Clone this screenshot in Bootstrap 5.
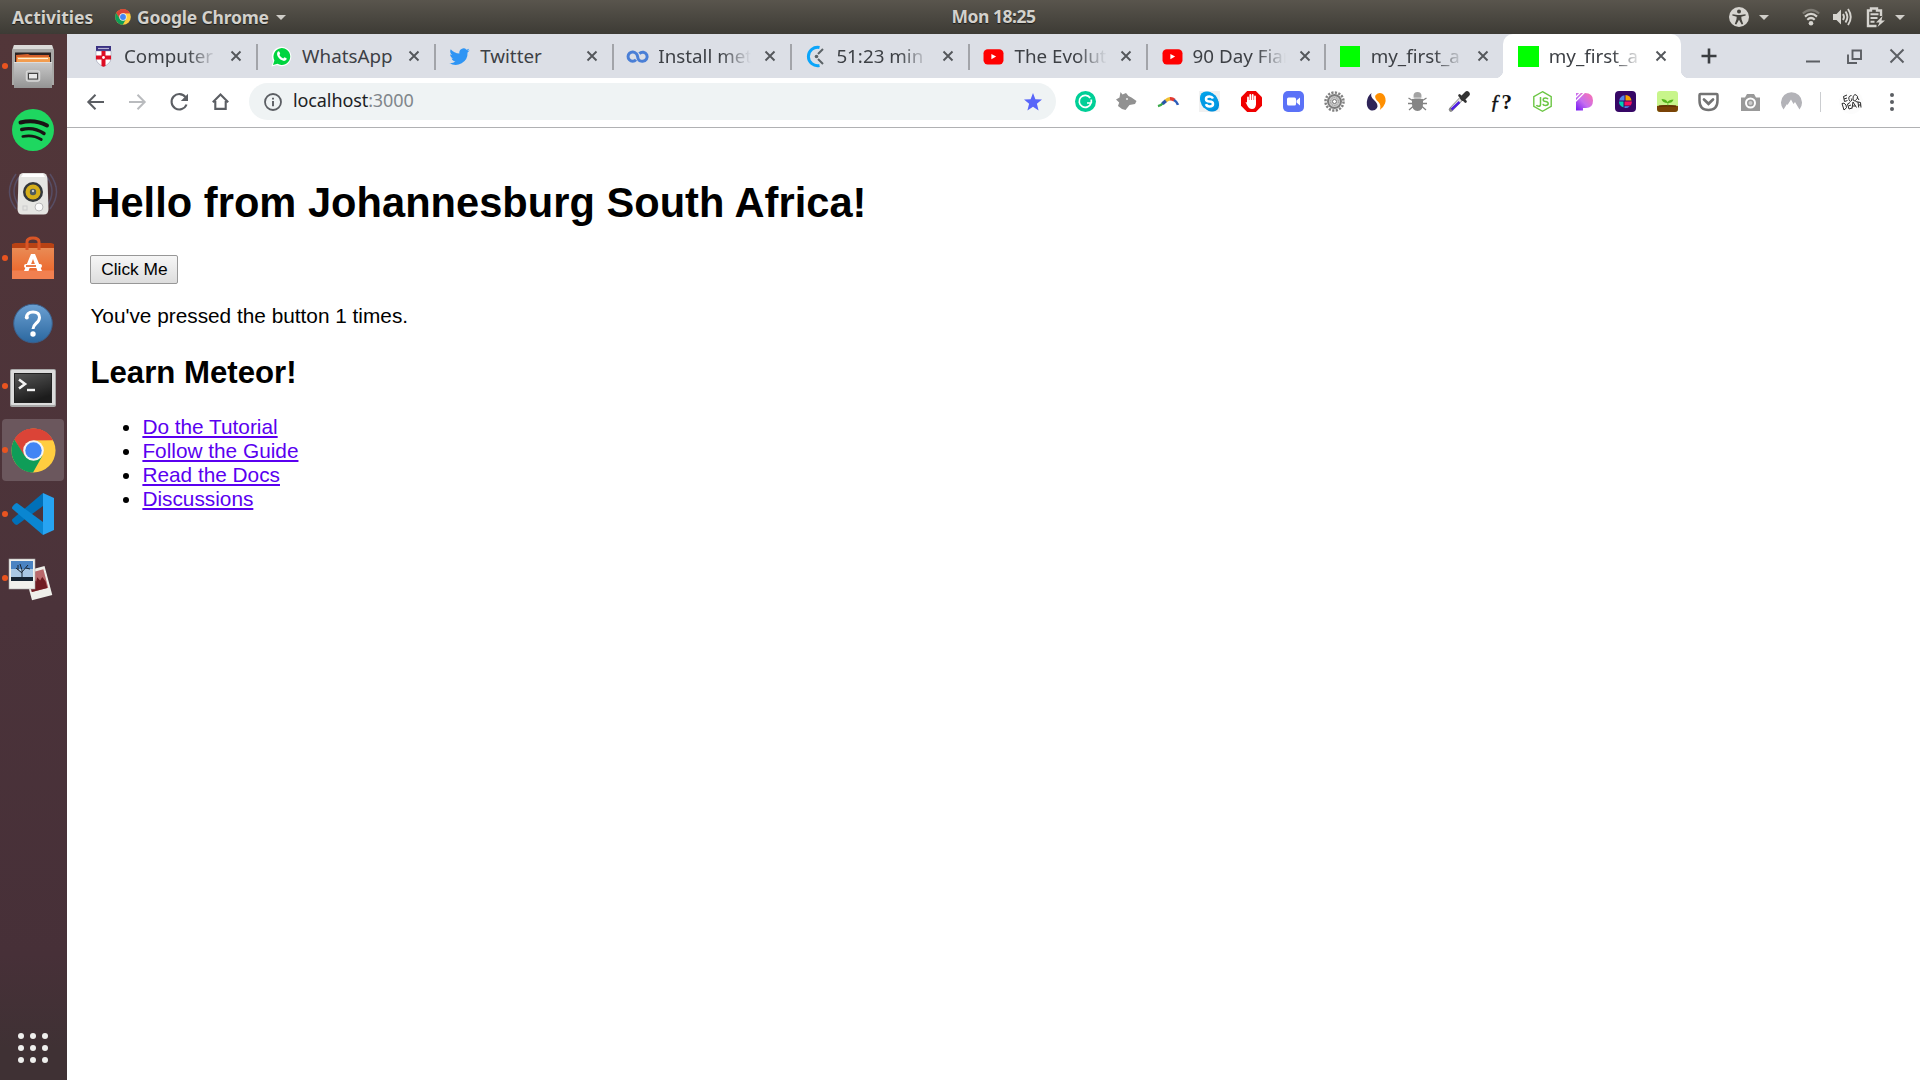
<!DOCTYPE html>
<html lang="en">
<head>
<meta charset="utf-8">
<meta name="viewport" content="width=device-width, initial-scale=1">
<title>my_first_app</title>
<link href="https://cdn.jsdelivr.net/npm/bootstrap@5.3.0/dist/css/bootstrap.min.css" rel="stylesheet">
<style>
  body { font-family: "Noto Sans", "Open Sans", sans-serif; background: #fff; height: 1080px; line-height: 1.2; }
  svg { display: block; flex: none; overflow: visible; }
  /* desktop panel */
  .panel-top { height: 34px; background: linear-gradient(#59554d, #3d3b35); color: #d3d1cc; font-weight: 700; font-size: 17.5px; text-shadow: 0 1px 1px rgba(0,0,0,.6); }
  .panel-start { flex: 1 1 67px; }
  .panel-end { flex: 1 1 0; }
  .p-activities { margin-left: 12px; width: 103px; }
  .p-app { width: 135px; margin-left: 6px; letter-spacing: -.2px; }
  .p-clock { letter-spacing: -.5px; padding-bottom: 1px; }
  .caret-d { width: 0; height: 0; border: 5px solid transparent; border-top-color: #d0cec9; border-bottom: 0; }
  /* dock */
  .dock { width: 67px; background: linear-gradient(#523639, #4b333a 55%, #473038 88%, #3f3134 97%); padding: 1px 3px 0 2px; gap: 2px; }
  .dock-item { height: 62px; width: 62px; border-radius: 4px; }
  .dock-item.active { background: #6b575d; }
  .dock-item.running::before { content: ""; position: absolute; left: 0; top: 28px; width: 6px; height: 6px; border-radius: 50%; background: #e95420; }
  .dock-apps { padding-bottom: 3px; }
  /* tabs */
  .tabstrip { height: 44px; background: #dcdfe6; padding-left: 11px; color: #3d4045; font-size: 18.8px; }
  .tab-item { width: 178.1px; height: 44px; padding-left: 15px; }
  .tab-item.divided::after { content: ""; position: absolute; right: -1.500px; top: 10px; width: 2px; height: 26px; background: #a2a4a9; }
  .tab-name { width: 93px; margin-left: 10px; white-space: nowrap; -webkit-mask-image: linear-gradient(90deg, #000 68%, transparent 100%); mask-image: linear-gradient(90deg, #000 68%, transparent 100%); line-height: 30px; padding-bottom: 1px; }
  .tab-name.full { -webkit-mask-image: none; mask-image: none; }
  .tab-x { margin-left: 13px; }
  .tab-item.current { background: #fff; border-radius: 10px 10px 0 0; }
  .tab-item.current::before, .tab-item.current::after { content: ""; position: absolute; bottom: 0; width: 8px; height: 8px; }
  .tab-item.current::before { left: -8px; background: radial-gradient(circle at 0 0, transparent 8px, #fff 8.5px); }
  .tab-item.current::after { right: -8px; background: radial-gradient(circle at 100% 0, transparent 8px, #fff 8.5px); }
  /* toolbar */
  .toolbar { height: 50px; border-bottom: 1px solid #b0b1b3; padding: 0 0 2px 8px; }
  .nav-b { width: 41.6px; }
  .omni { width: 807.5px; height: 37px; border-radius: 19px; background: #eff3f4; margin-left: 7.6px; padding: 0 14px 0 15px; font-size: 18px; color: #202124; }
  .omni-url { letter-spacing: -.1px; padding-bottom: 1px; }
  .ext { width: 41.57px; }
  .sep { width: 1px; height: 20px; background: #cbcdd0; margin-left: 7.500px; }
  .f-mark { font: italic 700 21px "Liberation Serif", serif; color: #111; line-height: 22px; }
  .f-mark b { font-style: normal; margin-left: 1px; }
  .f-mark i { font-weight: 400; -webkit-text-stroke: .4px #111; }
  /* page */
  .page-body { font-family: "Liberation Sans", Arial, sans-serif; font-size: 20.8px; color: #000; padding: 51.3px 23.4px 0; line-height: 24px; }
  .page-body h1 { font-size: 41.6px; font-weight: 700; line-height: 48px; margin: 0 0 27.7px; color: #000; letter-spacing: .03px; }
  .page-body h2 { font-size: 31.2px; font-weight: 700; line-height: 36px; margin: 0 0 24.4px; color: #000; }
  .page-body p { margin: 19.8px 0 27px; }
  .page-body ul { padding-left: 52px; margin: 0; }
  .page-body a { color: #5a00f0; text-decoration: underline; }
  .page-btn { display: block; font-size: 17.33px; line-height: 19px; height: 29px; width: 88px; padding: 0; color: #000; border: 1px solid #979797; border-radius: 2px; background: linear-gradient(#f6f6f6, #dddddd); }
</style>
<script src="https://cdn.jsdelivr.net/npm/bootstrap@5.3.0/dist/js/bootstrap.bundle.min.js"></script>
</head>
<body class="d-flex flex-column overflow-hidden">
<svg width="0" height="0" class="position-absolute">
  <defs>
    <symbol id="chrome" viewBox="0 0 48 48">
      <circle cx="24" cy="24" r="23.5" fill="#ffcd40"/>
      <path d="M24 24 3.600 12.300A23.500 23.500 0 0 1 44.600 12.800L24 13z" fill="#db4437"/>
      <path d="M24 13H44.700A23.500 23.500 0 0 0 3.600 12.300L14 30z" fill="#db4437"/>
      <path d="M3.600 12.300A23.500 23.500 0 0 0 23.500 47.500L33.500 29.500 24 34 14.500 29.500z" fill="#0f9d58"/>
      <circle cx="24" cy="24" r="11" fill="#f4f4f4"/><circle cx="24" cy="24" r="8.800" fill="#4285f4"/>
    </symbol>
    <symbol id="x" viewBox="0 0 12 12"><path d="M1.500 1.500l9 9M10.500 1.500l-9 9" stroke="#54575b" stroke-width="1.900" fill="none"/></symbol>
    <symbol id="yt" viewBox="0 0 20 20"><rect x=".5" y="3" width="19" height="14.500" rx="4" fill="#f00"/><path d="M8 7.500v5l4.500-2.500z" fill="#fff"/></symbol>
  </defs>
</svg>

<header class="panel-top d-flex align-items-center">
  <div class="panel-start d-flex align-items-center">
    <span class="p-activities">Activities</span>
    <svg width="16" height="16"><use href="#chrome"/></svg>
    <span class="p-app text-nowrap">Google Chrome</span>
    <span class="caret-d ms-1"></span>
  </div>
  <span class="p-clock">Mon 18:25</span>
  <div class="panel-end d-flex align-items-center justify-content-end">
    <svg width="20" height="20" viewBox="0 0 20 20"><circle cx="10" cy="10" r="10" fill="#d6d4cf"/><circle cx="10" cy="4.500" r="2" fill="#45433d"/><path d="M3.500 7.200l5 .8h3l5-.8.200 1.400-4.400 1.200.2 2.500 1.700 4.600-1.500.6L10 12.800l-2.700 4.700-1.500-.6 1.700-4.600.2-2.500-4.400-1.200z" fill="#45433d"/></svg>
    <span class="caret-d" style="margin:0 33px 0 10px"></span>
    <svg width="18" height="18" viewBox="0 0 18 18" fill="none" stroke-width="2.200"><path d="M.8 5.500Q9-1.500 17.200 5.500" stroke="#7d7a73"/><path d="M3 8.600Q9 3.200 15 8.600M5.300 11.700Q9 8.300 12.700 11.700" stroke="#d6d4cf"/><circle cx="9" cy="15.300" r="2.300" fill="#d6d4cf"/></svg>
    <svg width="20" height="20" viewBox="0 0 20 20" style="margin-left:12px"><path d="M1 7h3.500L9 2.500v15L4.500 13H1z" fill="#d6d4cf"/><path d="M11 7q2 3 0 6M13.500 4.500q3.800 5.500 0 11M16 2q5.500 8 0 16" fill="none" stroke="#d6d4cf" stroke-width="1.900"/></svg>
    <svg width="19" height="20" viewBox="0 0 19 20" style="margin-left:14px"><path d="M10.500 19H2V3.500h3V1.500h6v2h4V9" fill="none" stroke="#d6d4cf" stroke-width="2.400"/><path d="M4.500 7.200h8M4.500 11h7M4.500 14.800h4" stroke="#d6d4cf" stroke-width="2"/><path d="M16.500 9L10 15.500h3.500L11.500 20l7.500-6.500h-3.500z" fill="#d6d4cf"/></svg>
    <span class="caret-d" style="margin:0 15px 0 10px"></span>
  </div>
</header>

<div class="d-flex flex-grow-1">
  <aside class="dock d-flex flex-column flex-shrink-0">
    <div class="dock-item running position-relative d-flex align-items-center justify-content-center">
      <svg width="42" height="44" viewBox="0 0 42 44"><defs><linearGradient id="cab" x2="0" y2="1"><stop stop-color="#c9c9c9"/><stop offset="1" stop-color="#949494"/></linearGradient></defs><path d="M2 1h38l2 5v35H0V6z" fill="#a9a9a7"/><path d="M2 1h38l1 4H1z" fill="#dadad8"/><path d="M3 8.500h36V18H3z" fill="#292323"/><path d="M4 11l12-1 2 1h19v8H4z" fill="#d4602b"/><path d="M5 13h33v6H5z" fill="#f29c4e"/><path d="M6 14.500h30" stroke="#fff0d8" stroke-width="1.200"/><path d="M2 18h38v26H2z" fill="url(#cab)"/><path d="M2 18.500h38" stroke="#ddd"/><rect x="14.500" y="27" width="13" height="10" rx="2" fill="#aaa" stroke="#d7d7d7" stroke-width="1.500"/><rect x="16.500" y="29.500" width="9" height="5.500" fill="#e8e8e8" stroke="#444"/></svg>
    </div>
    <div class="dock-item d-flex align-items-center justify-content-center">
      <svg width="42" height="42" viewBox="0 0 42 42"><circle cx="21" cy="21" r="21" fill="#1ed760"/><g fill="none" stroke="#191414" stroke-linecap="round"><path d="M8.500 13.500q14-3.800 26.500 3" stroke-width="4"/><path d="M9.700 20.500q12-3 22.300 4" stroke-width="3.400"/><path d="M10.800 27.500q10-2.300 18.500 3" stroke-width="2.700"/></g></svg>
    </div>
    <div class="dock-item d-flex align-items-center justify-content-center">
      <svg width="48" height="42" viewBox="0 0 48 42"><g fill="none" stroke="#5d6690" stroke-width="1.500" opacity=".5"><path d="M7 1q-13 18 0 35M10 4q-10 14 0 29M41 1q13 18 0 35M38 4q10 14 0 29"/></g><path d="M14 0h20q4 0 4.500 6l1 30q0 5.500-5 5.500h-21q-5 0-5-5.500l1-30q.5-6 4.500-6z" fill="#e5e5e2"/><path d="M14 1h20l2 3H12z" fill="#fff"/><circle cx="24" cy="19" r="10" fill="#34383b"/><circle cx="24" cy="19" r="7.500" fill="#d5ae19"/><circle cx="24" cy="19" r="3.200" fill="#4d5a60"/><circle cx="24" cy="18" r="1.200" fill="#ccc"/><circle cx="30" cy="34" r="4" fill="#fbfbfb" stroke="#bbb"/><rect x="14" y="33" width="4" height="4" fill="none" stroke="#ccc"/></svg>
    </div>
    <div class="dock-item running position-relative d-flex align-items-center justify-content-center">
      <svg width="42" height="44" viewBox="0 0 42 44"><defs><linearGradient id="bag" x2="0" y2="1"><stop stop-color="#e98b55"/><stop offset=".7" stop-color="#ec6c31"/><stop offset=".75" stop-color="#f18050"/></linearGradient></defs><path d="M0 8l3-1h36l3 1v5H0z" fill="#b84214"/><path d="M0 12h42v31H0z" fill="url(#bag)"/><path d="M15 14V6q0-4 6-4t6 4v8" fill="none" stroke="#d95526" stroke-width="3"/><path d="M12 35l7-17h4l7 17h-4.500l-4.500-12-4.500 12z" fill="#fff"/><rect x="12" y="28" width="18" height="4" rx="2" fill="#fff"/><path d="M14 30h10" stroke="#e8672e" stroke-width="1.700"/></svg>
    </div>
    <div class="dock-item d-flex align-items-center justify-content-center pt-1">
      <svg width="40" height="40" viewBox="0 0 40 40"><defs><linearGradient id="hlp" x2="0" y2="1"><stop stop-color="#6ba0d2"/><stop offset="1" stop-color="#2b679f"/></linearGradient></defs><circle cx="20" cy="19.5" r="19.300" fill="url(#hlp)" stroke="#3b5f8b"/><path d="M13.500 14q0-6 6.500-6t6.500 5.500q0 3-3.500 6-2.800 2.500-3 5.500" fill="none" stroke="#fff" stroke-width="3"/><circle cx="13.800" cy="13.500" r="2" fill="#fff"/><circle cx="20" cy="30" r="2.700" fill="#fff"/></svg>
    </div>
    <div class="dock-item running position-relative d-flex align-items-center justify-content-center pt-1">
      <svg width="46" height="38" viewBox="0 0 46 38"><defs><linearGradient id="trm" x2=".4" y2="1"><stop stop-color="#565656"/><stop offset="1" stop-color="#1c1c1c"/></linearGradient></defs><rect width="46" height="38" rx="2" fill="#a8a8a8"/><rect x="1" y="1" width="44" height="35" rx="1" fill="#dcdcdc"/><rect x="4" y="4" width="38" height="30" fill="#222"/><rect x="5" y="5" width="36" height="28" fill="url(#trm)"/><path d="M9 10.500l6 4.500-6 4.500" fill="none" stroke="#f3f3f3" stroke-width="2.600"/><path d="M17 21h8" stroke="#f3f3f3" stroke-width="2.400"/></svg>
    </div>
    <div class="dock-item running active position-relative d-flex align-items-center justify-content-center"><svg width="45" height="45"><use href="#chrome"/></svg></div>
    <div class="dock-item running position-relative d-flex align-items-center justify-content-center">
      <svg width="42" height="42" viewBox="0 0 42 42"><path d="M31 0v13L5 32q-2 0-4.500-3.500Q-.5 27 .5 26z" fill="#0070b8"/><path d="M.5 16Q-.5 15 .5 13.500 3 10 5 10l26 19v13z" fill="#0a86d1"/><path d="M31 0l11 5v32l-11 5z" fill="#27a4f2"/></svg>
    </div>
    <div class="dock-item running position-relative d-flex align-items-center justify-content-center pt-1 pe-1">
      <svg width="44" height="42" viewBox="0 0 44 42"><g transform="rotate(-15 30 25)"><rect x="19" y="9" width="21" height="30" fill="#efefea"/><rect x="21" y="12" width="17" height="19" fill="#b9686b"/><path d="M21 31v-9l2-2 1 3 2-4 2 3 2-4 2 4 3-3 2 5v7z" fill="#701c22"/></g><rect x="0" y="0" width="26" height="30" fill="#f1f1ed" stroke="#aaa" stroke-width=".6"/><rect x="2" y="2" width="22" height="19" fill="#4a83c2"/><path d="M2 10h22v8H2z" fill="#a9c8e4"/><path d="M2 18h22v4H2z" fill="#162432"/><path d="M13 19v-8M13 14L7 9M13 13l6-7M9 11V6M17 9l4 1M13 11l-2-6" stroke="#1a2633" stroke-width="1"/></svg>
    </div>
    <div class="dock-apps dock-item mt-auto d-flex align-items-center justify-content-center">
      <svg width="32" height="32" viewBox="-16 -16 32 32" fill="#efefed"><circle cx="-12" cy="-12" r="3"/><circle cy="-12" r="3"/><circle cx="12" cy="-12" r="3"/><circle cx="-12" r="3"/><circle r="3"/><circle cx="12" r="3"/><circle cx="-12" cy="12" r="3"/><circle cy="12" r="3"/><circle cx="12" cy="12" r="3"/></svg>
    </div>
  </aside>

  <main class="flex-grow-1">
    <div class="tabstrip d-flex align-items-center">
      <div class="tab-item divided position-relative d-flex align-items-center">
        <svg width="21" height="21" viewBox="0 0 21 21"><path d="M3 0h15v5H3z" fill="#3a3182"/><path d="M5 2.500h11" stroke="#b7b3d5" stroke-width="1.200"/><path d="M3 5h15v8q-1 5-7.500 7.500Q4 18 3 13z" fill="#fff" stroke="#8d8fa6" stroke-width=".5"/><path d="M8.500 5h4v15l-2 .7-2-.7zM3 9.500h15v4H3z" fill="#dd0d24"/><circle cx="10.500" cy="11.500" r="1.400" fill="#fff"/></svg>
        <span class="tab-name">Computer</span><svg class="tab-x" width="12" height="12"><use href="#x"/></svg>
      </div>
      <div class="tab-item divided position-relative d-flex align-items-center">
        <svg width="21" height="21" viewBox="0 0 21 21"><path d="M.5 20.500l1.700-5.200A9.700 9.700 0 1 1 6 19z" fill="#fff"/><path d="M2 19l1.400-4.600A8.400 8.400 0 1 1 6.500 17.700z" fill="#00d43f"/><path d="M6.500 6q1.200-1.500 2 0l.7 1.800-.8 1.200q1.200 2.400 3.800 3.400l1.200-1.200 2.200 1.100q.3 2.200-2.600 2.600-4-.4-6.500-4.800-1-2.300 0-4.100z" fill="#fff"/></svg>
        <span class="tab-name full">WhatsApp</span><svg class="tab-x" width="12" height="12"><use href="#x"/></svg>
      </div>
      <div class="tab-item divided position-relative d-flex align-items-center">
        <svg width="21" height="21" viewBox="0 0 24 24"><path fill="#2f95f4" d="M23.600 4.900c-.8.400-1.800.6-2.700.8 1-.6 1.700-1.500 2.100-2.600-.9.500-1.900.9-3 1.100A4.800 4.800 0 0 0 11.900 8.600C7.900 8.400 4.400 6.500 2 3.600 .7 5.800 1.400 8.600 3.500 10c-.8 0-1.500-.2-2.200-.6 0 2.300 1.600 4.300 3.800 4.800-.7.200-1.400.2-2.100.1.600 1.900 2.400 3.300 4.400 3.300A9.600 9.600 0 0 1 .3 19.500 13.600 13.600 0 0 0 21.200 7.400c.9-.7 1.700-1.500 2.400-2.500z"/></svg>
        <span class="tab-name full">Twitter</span><svg class="tab-x" width="12" height="12"><use href="#x"/></svg>
      </div>
      <div class="tab-item divided position-relative d-flex align-items-center">
        <svg width="21" height="21" viewBox="0 0 21 21"><path d="M9 13.700A4.600 4.600 0 1 1 9.200 7.600Q10.500 9 10.700 11q.3 4.500 5 4.200a4.500 4.500 0 1 0-3.300-7.600" fill="none" stroke="#4a7fd6" stroke-width="3"/></svg>
        <span class="tab-name">Install met</span><svg class="tab-x" width="12" height="12"><use href="#x"/></svg>
      </div>
      <div class="tab-item divided position-relative d-flex align-items-center">
        <svg width="21" height="21" viewBox="0 0 21 21"><path d="M14.500 1.500a9.200 9.200 0 1 0 0 18" fill="none" stroke="#0aa5fa" stroke-width="3"/><path d="M13 8l5-5M13 13l5 5" stroke="#5c6367" stroke-width="2"/><circle cx="11.500" cy="10.500" r="1.800" fill="#5c6367"/></svg>
        <span class="tab-name">51:23 min •</span><svg class="tab-x" width="12" height="12"><use href="#x"/></svg>
      </div>
      <div class="tab-item divided position-relative d-flex align-items-center">
        <svg width="21" height="21"><use href="#yt"/></svg>
        <span class="tab-name">The Evolut</span><svg class="tab-x" width="12" height="12"><use href="#x"/></svg>
      </div>
      <div class="tab-item divided position-relative d-flex align-items-center">
        <svg width="21" height="21"><use href="#yt"/></svg>
        <span class="tab-name">90 Day Fiar</span><svg class="tab-x" width="12" height="12"><use href="#x"/></svg>
      </div>
      <div class="tab-item position-relative d-flex align-items-center">
        <svg width="21" height="21"><path d="M0 0h20v21H0z" fill="#0f0"/></svg>
        <span class="tab-name">my_first_a</span><svg class="tab-x" width="12" height="12"><use href="#x"/></svg>
      </div>
      <div class="tab-item current position-relative d-flex align-items-center">
        <svg width="21" height="21"><path d="M0 0h21v21H0z" fill="#0f0"/></svg>
        <span class="tab-name">my_first_a</span><svg class="tab-x" width="12" height="12"><use href="#x"/></svg>
      </div>
      <svg width="16" height="16" viewBox="0 0 16 16" style="margin-left:20px"><path d="M8 .5v15M.5 8h15" stroke="#3a3d41" stroke-width="2.600"/></svg>
      <div class="d-flex align-items-center ms-auto" style="padding-right:16px">
        <svg width="14" height="14"><path d="M0 12.500h14" stroke="#5c5f64" stroke-width="2"/></svg>
        <svg width="15" height="15" viewBox="0 0 15 15" style="margin:0 28px 0 27px"><path d="M5.500 1.500h8.500V10H5.500zM1 5.500V14h9" fill="none" stroke="#5c5f64" stroke-width="1.900"/></svg>
        <svg width="14" height="14" viewBox="0 0 14 14"><path d="M.5.500l13 13M13.500.5l-13 13" stroke="#5c5f64" stroke-width="2"/></svg>
      </div>
    </div>

    <div class="toolbar d-flex align-items-center">
      <span class="nav-b d-flex justify-content-center"><svg width="17" height="16" viewBox="0 0 17 16"><path d="M17 8H1.500M8.500.8L1.300 8l7.200 7.200" fill="none" stroke="#5b5e63" stroke-width="2"/></svg></span>
      <span class="nav-b d-flex justify-content-center"><svg width="17" height="16" viewBox="0 0 17 16"><path d="M0 8h15.500M8.500.8L15.700 8l-7.200 7.200" fill="none" stroke="#b9bbbe" stroke-width="2"/></svg></span>
      <span class="nav-b d-flex justify-content-center"><svg width="18" height="18" viewBox="0 0 18 18"><path d="M15.500 4.200A7.700 7.700 0 1 0 16.500 11.500" fill="none" stroke="#5b5e63" stroke-width="2.100"/><path d="M18 .8V8h-7.200z" fill="#5b5e63"/></svg></span>
      <span class="nav-b d-flex justify-content-center"><svg width="17" height="17" viewBox="0 0 17 17"><path d="M.8 9.200L8.500 1.500l7.700 7.700M3.300 8v7.900h10.400V8" fill="none" stroke="#5b5e63" stroke-width="2.100"/></svg></span>
      <div class="omni d-flex align-items-center">
        <svg width="18" height="18" viewBox="0 0 18 18"><circle cx="9" cy="9" r="8" fill="none" stroke="#5b5e63" stroke-width="1.800"/><path d="M9 8v5.200M9 4.700v1.900" stroke="#5b5e63" stroke-width="1.900"/></svg>
        <span class="omni-url" style="margin-left:11px">localhost<span style="color:#80868b">:3000</span></span>
        <svg class="ms-auto" width="18" height="18" viewBox="0 0 18 18"><path d="M9 0l2.400 6.200 6.600.4-5.100 4.200 1.700 6.600L9 13.800l-5.600 3.600 1.700-6.600L0 6.600l6.600-.4z" fill="#5865f9"/></svg>
      </div>
      <div class="d-flex align-items-center" style="margin-left:8px">
        <span class="ext d-flex justify-content-center"><svg width="21" height="21" viewBox="0 0 21 21"><circle cx="10.500" cy="10.500" r="10.500" fill="#00cf97"/><path d="M15.200 7A6 6 0 1 0 16 12h-4M16.300 8.500V12" fill="none" stroke="#fff" stroke-width="1.700"/></svg></span>
        <span class="ext d-flex justify-content-center"><svg width="21" height="21" viewBox="0 0 21 21"><path d="M4.500 1l2 2.500L10 2l2.500 3 3 1.500 5 3.500-1.500 3-5.500 1-4 5-3.500-1-4-3 1.200-3.500L0 8.500l3.500-2z" fill="#919191"/><circle cx="11" cy="8" r="1" fill="#eee"/></svg></span>
        <span class="ext d-flex justify-content-center"><svg width="21" height="21" viewBox="0 0 21 21" fill="none" stroke-width="3.400"><path d="M0 15.200q3-.8 5.500-3.500" stroke="#3aaa4a" stroke-width="2.400"/><path d="M4.500 12.800L8.200 9.500" stroke="#2a55a8"/><path d="M7.800 9.800Q10 8 12.200 7.800" stroke="#f1bf32"/><path d="M12 7.800q2.500-.2 4.500 1.500" stroke="#e43a30"/><path d="M16 9q3 1.800 4 4.800" stroke="#2b5cb9" stroke-width="2.600"/></svg></span>
        <span class="ext d-flex justify-content-center"><svg width="21" height="21" viewBox="0 0 21 21"><path d="M0 0h21v21H0z" fill="#f1f1f1"/><rect x="1" y=".5" width="14" height="14" rx="6" fill="#00a4ea"/><rect x="6" y="6.500" width="14" height="14" rx="6" fill="#0090dc"/><circle cx="10.500" cy="10.500" r="8.500" fill="#039be5"/><path d="M14 7.500Q13 5.500 10.500 5.500 7 5.500 7 8t3.500 2.500T14 13q0 2.500-3.500 2.500Q7.700 15.500 7 13.200" fill="none" stroke="#fff" stroke-width="2.500"/></svg></span>
        <span class="ext d-flex justify-content-center"><svg width="21" height="21" viewBox="0 0 21 21"><path d="M6.200 0h8.600L21 6.200v8.600L14.800 21H6.200L0 14.800V6.200z" fill="#f00000"/><path d="M7 12V6.500M9.300 10V4M11.700 10V4M14 11V5.500" stroke="#fff" stroke-width="1.800" stroke-linecap="round"/><path d="M6 9h9v4.500Q14.500 18 11 18q-3 0-4.500-3L4.500 11l1.500.5z" fill="#fff"/></svg></span>
        <span class="ext d-flex justify-content-center"><svg width="21" height="21" viewBox="0 0 21 21"><rect width="21" height="21" rx="5" fill="#5b72f7"/><rect x="4" y="6.500" width="9" height="8" rx="1.500" fill="#fff"/><path d="M13.500 9.500l3.500-3v8l-3.500-3z" fill="#fff"/></svg></span>
        <span class="ext d-flex justify-content-center"><svg width="21" height="21" viewBox="0 0 21 21"><circle cx="10.500" cy="10.500" r="9" fill="none" stroke="#818181" stroke-width="2.500" stroke-dasharray="2.200 1.340"/><circle cx="10.500" cy="10.500" r="6.500" fill="#c9c9c9" stroke="#7b7b7b" stroke-width="2"/><circle cx="10.500" cy="10.500" r="4" fill="none" stroke="#999" stroke-dasharray="1.500 1"/><circle cx="10.500" cy="10.500" r="2" fill="#fff" stroke="#777"/></svg></span>
        <span class="ext d-flex justify-content-center"><svg width="21" height="21" viewBox="0 0 21 21"><path d="M5.500 2Q4 5.500 8 9q5 4.500 3 8-2.500 3.500-6.500 2.200Q.5 17.500.8 11 1.500 5 5.500 2z" fill="#2e2458"/><path d="M9.500 4.200Q13 .5 17 3q4 4 2 9.500-1.500 4-5.200 6.500 1.700-4.500-1.300-8-4.500-4-3-6.800z" fill="#ff8f00"/></svg></span>
        <span class="ext d-flex justify-content-center"><svg width="21" height="21" viewBox="0 0 21 21"><path d="M1.500 7l4 2.500M19.500 7l-4 2.500M1 12.500h19M2 19l4-3.500M19 19l-4-3.500" stroke="#818181" stroke-width="1.300"/><circle cx="10.500" cy="5" r="4" fill="#a3a3a3"/><path d="M5 8h11v5q0 7-5.500 7T5 13z" fill="#858585"/><path d="M5.500 7h10" stroke="#ddd"/></svg></span>
        <span class="ext d-flex justify-content-center"><svg width="21" height="21" viewBox="0 0 21 21"><path d="M12 8L2 18.500" stroke="#888" stroke-width="4.500" stroke-linecap="round"/><path d="M12 8L3 17.500" stroke="#e4e4e4" stroke-width="3"/><path d="M10.500 11l-8 7.500" stroke="#4f1de2" stroke-width="2.400"/><path d="M10.500 4.500l6 6" stroke="#333" stroke-width="2.600" stroke-linecap="round"/><path d="M14 7l4-4" stroke="#333" stroke-width="5.500" stroke-linecap="round"/></svg></span>
        <span class="ext f-mark d-flex justify-content-center"><i>ƒ</i><b>?</b></span>
        <span class="ext d-flex justify-content-center"><svg width="21" height="21" viewBox="0 0 21 21"><path d="M10.500.7l8.700 5v9.600l-8.700 5-8.700-5V5.700z" fill="none" stroke="#6cc644" stroke-width="1.400"/><path d="M8.500 6v7.500q0 1.800-2 1.800-1.600 0-2-1.200M16 8.300Q15.500 7 13.500 7q-2.300 0-2.300 1.700 0 1.500 2.400 1.700 2.600.3 2.600 2.200 0 1.900-2.700 1.900-2.300 0-2.600-1.700" fill="none" stroke="#6cc644" stroke-width="1.500"/></svg></span>
        <span class="ext d-flex justify-content-center"><svg width="21" height="21" viewBox="0 0 21 21"><defs><linearGradient id="pp" x1="1" x2="0" y2="1"><stop stop-color="#ff72aa"/><stop offset=".55" stop-color="#c66ef0"/><stop offset="1" stop-color="#7417f2"/></linearGradient></defs><path d="M2 2h9q8 0 8 7.500T12 17H9v2.500H2z" fill="url(#pp)"/><path d="M1 7l7-7M1 11L11 1" stroke="#fff" stroke-width="1.200"/></svg></span>
        <span class="ext d-flex justify-content-center"><svg width="21" height="21" viewBox="0 0 21 21"><rect width="21" height="21" rx="4" fill="#360766"/><path d="M9.500 9.500V4.200a6.500 6.500 0 0 0-5.300 5.300z" fill="#4f87ed"/><path d="M10.500 9.500V4a6.500 6.500 0 0 1 6 5.500z" fill="#f9a500"/><path d="M8.500 10.500v6a6.500 6.500 0 0 1-4.500-6z" fill="#00cfb4"/><path d="M9.500 10.500H17a6.500 6.500 0 0 1-1.500 4H9.500z" fill="#f7115e"/><path d="M9.500 15.200h5.300a6.500 6.500 0 0 1-5.300 1.800z" fill="#4f87ed"/></svg></span>
        <span class="ext d-flex justify-content-center"><svg width="21" height="21" viewBox="0 0 21 21"><rect width="21" height="21" rx="3" fill="#c8f58b"/><path d="M0 15q10-2 21 0v3q0 3-3 3H3q-3 0-3-3z" fill="#7a4306"/><path d="M2 15.300q8-1.300 17 0" stroke="#5e3204" stroke-width="1.500" fill="none"/><path d="M10.500 14.500v-2.500Q5.500 12 4.500 8q4.800 0 6 3Q12 8.500 16.500 8.500q-1 3.500-5.200 3.500v2.500z" fill="#55b51c"/></svg></span>
        <span class="ext d-flex justify-content-center"><svg width="21" height="21" viewBox="0 0 21 21"><path d="M2.500 3h16q1 0 1 1v5.500q0 9.500-9 9.500t-9-9.500V4q0-1 1-1z" fill="none" stroke="#737373" stroke-width="2.500"/><path d="M6 8.500l4.500 4.300L15 8.500" fill="none" stroke="#737373" stroke-width="2.700" stroke-linecap="round"/></svg></span>
        <span class="ext d-flex justify-content-center"><svg width="21" height="21" viewBox="0 0 21 21"><path d="M1 6.500h4l2-3.500h7L16 6.500h4V20H1z" fill="#999"/><circle cx="10.500" cy="12" r="4.500" fill="#999" stroke="#fff" stroke-width="2"/><circle cx="10.500" cy="12" r="2" fill="#ccc"/></svg></span>
        <span class="ext d-flex justify-content-center"><svg width="21" height="21" viewBox="0 0 21 21"><path d="M2.500 18.500A10.500 10.500 0 1 1 18.500 18.500L14 11l-1.500 2L10 8.500 6.500 14l-.5-1z" fill="#b3b3b8"/></svg></span>
      </div>
      <span class="sep"></span>
      <svg width="24" height="24" viewBox="0 0 24 24" style="margin-left:18px"><circle cx="12" cy="12" r="12" fill="#fcfcfc"/><path d="M8 5L4.500 6.500l1 5 3-1M5 9l3-1M12.500 5.500q-3.500.5-2.500 4t3 .5l-.7-1.500M16 4.500q-2.500 1-2 4.500t3.500.5-1.500-5M18 7l2 3M3 13.500l2 6.500q4-2 2-5t-4-1.500M11 12.500l-2.500 1.500 1.500 5 3-1M9.500 16l2.500-1M13 18.500l1-6.500 3.500 5.500M13.500 16h3M16.500 11.500l5 1M19 12l.7 5.500M21.500 12.500l.5 5M20 15h2" fill="none" stroke="#2b2b2b" stroke-width="1"/></svg>
      <svg width="4" height="18" viewBox="0 0 4 18" style="margin-left:27px" fill="#5b5e63"><circle cx="2" cy="2" r="2"/><circle cx="2" cy="9" r="2"/><circle cx="2" cy="16" r="2"/></svg>
    </div>

    <section class="page-body">
      <h1>Hello from Johannesburg South Africa!</h1>
      <button class="page-btn">Click Me</button>
      <p>You've pressed the button 1 times.</p>
      <h2>Learn Meteor!</h2>
      <ul>
        <li><a href="#">Do the Tutorial</a></li>
        <li><a href="#">Follow the Guide</a></li>
        <li><a href="#">Read the Docs</a></li>
        <li><a href="#">Discussions</a></li>
      </ul>
    </section>
  </main>
</div>
</body>
</html>
